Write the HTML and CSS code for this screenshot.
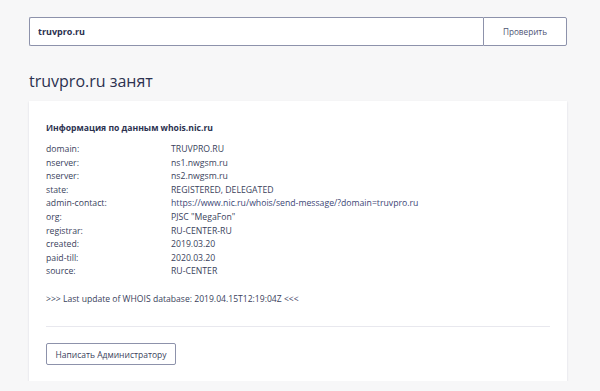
FILE: index.html
```html
<!DOCTYPE html>
<html lang="ru">
  <head>
    <meta charset="UTF-8" />
    <meta name="viewport" content="width=device-width, initial-scale=1.0" />
    <title>truvpro.ru занят</title>
    <link rel="stylesheet" href="styles.css">
  </head>
  <body>
    <div class="page">
      <form class="search">
        <input class="search-input" type="text" value="truvpro.ru" />
        <button class="search-btn" type="button">Проверить</button>
      </form>

      <h1 class="result-title">truvpro.ru занят</h1>

      <section class="card">
        <h2 class="card-title">Информация по данным whois.nic.ru</h2>
        <dl class="whois">
          <dt>domain:</dt><dd>TRUVPRO.RU</dd>
          <dt>nserver:</dt><dd>ns1.nwgsm.ru</dd>
          <dt>nserver:</dt><dd>ns2.nwgsm.ru</dd>
          <dt>state:</dt><dd>REGISTERED, DELEGATED</dd>
          <dt>admin-contact:</dt><dd><a href="#">https://www.nic.ru/whois/send-message/?domain=truvpro.ru</a></dd>
          <dt>org:</dt><dd>PJSC "MegaFon"</dd>
          <dt>registrar:</dt><dd>RU-CENTER-RU</dd>
          <dt>created:</dt><dd>2019.03.20</dd>
          <dt>paid-till:</dt><dd>2020.03.20</dd>
          <dt>source:</dt><dd>RU-CENTER</dd>
        </dl>
        <p class="updated">&gt;&gt;&gt; Last update of WHOIS database: 2019.04.15T12:19:04Z &lt;&lt;&lt;</p>
        <div class="card-footer">
          <button class="btn-outline" type="button">Написать Администратору</button>
        </div>
      </section>
    </div>
  </body>
</html>
```

FILE: styles.css
```css
body {
  margin: 0;
  background: #f7f7f8;
  font-family: "Open Sans", "Liberation Sans", sans-serif;
  color: #3a3f5c;
}

.page {
  padding: 17px 33px 0 29px;
}

.search {
  display: flex;
  height: 29px;
  margin: 0;
}

.search-input {
  flex: 1;
  min-width: 0;
  box-sizing: border-box;
  height: 29px;
  margin: 0;
  padding: 0 8px;
  border: 1px solid #8d92ab;
  border-right: none;
  border-radius: 2px 0 0 2px;
  background: #fff;
  font-family: inherit;
  font-size: 9px;
  font-weight: 700;
  color: #2c3150;
  outline: none;
}

.search-btn {
  width: 84px;
  box-sizing: border-box;
  height: 29px;
  margin: 0;
  border: 1px solid #8d92ab;
  border-radius: 0 2px 2px 0;
  background: #fff;
  font-family: inherit;
  font-size: 8.2px;
  color: #4d5373;
  cursor: pointer;
}

.result-title {
  margin: 24px 0 9px;
  font-size: 16px;
  line-height: 22px;
  font-weight: 400;
  color: #2c3150;
}

.card {
  background: #fff;
  box-shadow: 0 1px 2px rgba(40, 45, 90, 0.14);
  padding: 20px 17px 16px;
}

.card-title {
  margin: 0 0 8px;
  font-size: 8.6px;
  line-height: 14px;
  font-weight: 700;
  color: #2c3150;
}

.whois {
  display: grid;
  grid-template-columns: 125px 1fr;
  margin: 0;
  font-size: 8.7px;
  line-height: 13.6px;
}

.whois dt,
.whois dd {
  margin: 0;
}

.whois a {
  color: #3c4675;
  text-decoration: none;
}

.updated {
  margin: 13.6px 0 0;
  font-size: 8.6px;
  line-height: 13.6px;
}

.card-footer {
  margin-top: 20px;
  padding-top: 16px;
  border-top: 1px solid #e8e8ee;
}

.btn-outline {
  display: block;
  height: 22px;
  width: 130px;
  box-sizing: border-box;
  padding: 0;
  border: 1px solid #8d92ab;
  border-radius: 2px;
  background: #fff;
  font-family: inherit;
  font-size: 8.5px;
  color: #3a3f5c;
  cursor: pointer;
}
```
